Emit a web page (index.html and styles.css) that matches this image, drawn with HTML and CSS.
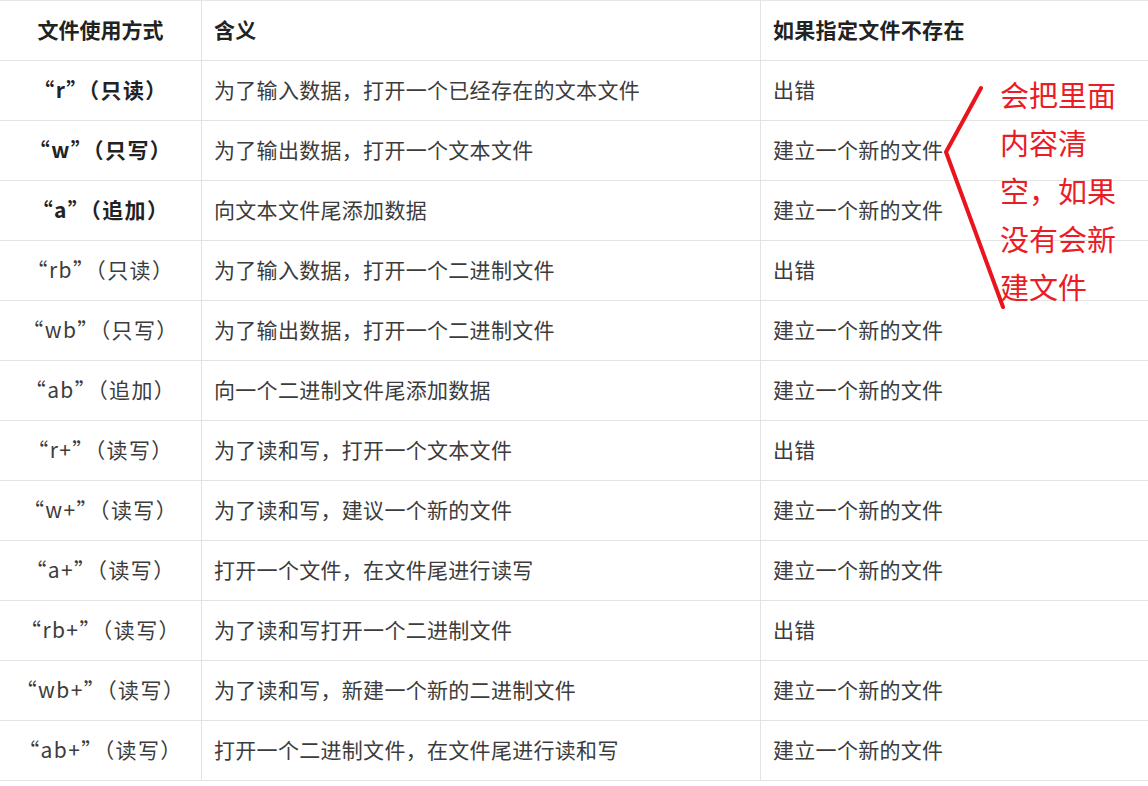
FILE: index.html
```html
<!DOCTYPE html>
<html lang="zh-CN">

<head>
    <meta charset="UTF-8">
    <meta name="viewport" content="width=device-width, initial-scale=1.0">
    <title>文件使用方式</title>
    <link rel="stylesheet" href="styles.css">
</head>

<body>
<div class="page">
    <table class="mode-table">
        <thead>
            <tr>
                <th class="col-mode">文件使用方式</th>
                <th class="col-mean">含义</th>
                <th class="col-miss">如果指定文件不存在</th>
            </tr>
        </thead>
        <tbody>
            <tr>
                <td class="col-mode strong">“r”（只读）</td>
                <td>为了输入数据，打开一个已经存在的文本文件</td>
                <td>出错</td>
            </tr>
            <tr>
                <td class="col-mode strong">“w”（只写）</td>
                <td>为了输出数据，打开一个文本文件</td>
                <td>建立一个新的文件</td>
            </tr>
            <tr>
                <td class="col-mode strong">“a”（追加）</td>
                <td>向文本文件尾添加数据</td>
                <td>建立一个新的文件</td>
            </tr>
            <tr>
                <td class="col-mode">“rb”（只读）</td>
                <td>为了输入数据，打开一个二进制文件</td>
                <td>出错</td>
            </tr>
            <tr>
                <td class="col-mode">“wb”（只写）</td>
                <td>为了输出数据，打开一个二进制文件</td>
                <td>建立一个新的文件</td>
            </tr>
            <tr>
                <td class="col-mode">“ab”（追加）</td>
                <td>向一个二进制文件尾添加数据</td>
                <td>建立一个新的文件</td>
            </tr>
            <tr>
                <td class="col-mode">“r+”（读写）</td>
                <td>为了读和写，打开一个文本文件</td>
                <td>出错</td>
            </tr>
            <tr>
                <td class="col-mode">“w+”（读写）</td>
                <td>为了读和写，建议一个新的文件</td>
                <td>建立一个新的文件</td>
            </tr>
            <tr>
                <td class="col-mode">“a+”（读写）</td>
                <td>打开一个文件，在文件尾进行读写</td>
                <td>建立一个新的文件</td>
            </tr>
            <tr>
                <td class="col-mode">“rb+”（读写）</td>
                <td>为了读和写打开一个二进制文件</td>
                <td>出错</td>
            </tr>
            <tr>
                <td class="col-mode">“wb+”（读写）</td>
                <td>为了读和写，新建一个新的二进制文件</td>
                <td>建立一个新的文件</td>
            </tr>
            <tr>
                <td class="col-mode">“ab+”（读写）</td>
                <td>打开一个二进制文件，在文件尾进行读和写</td>
                <td>建立一个新的文件</td>
            </tr>
        </tbody>
    </table>

    <!-- 手写批注 -->
    <svg class="note-mark" width="1148" height="786" viewBox="0 0 1148 786">
        <polyline points="981,88 946,152 1003,307" fill="none" stroke="#e8141e" stroke-width="4" stroke-linejoin="round" stroke-linecap="round"/>
    </svg>
    <div class="note-text">会把里面内容清空，如果没有会新建文件</div>
</div>
</body>

</html>
```

FILE: styles.css
```css
/* 表格页面 */
body {
    margin: 0;
    padding: 0;
    background-color: #fff;
    font-family: "Noto Sans CJK SC", "Noto Sans", sans-serif;
}

.page {
    position: relative;
    width: 1148px;
    height: 786px;
    overflow: hidden;
}

.mode-table {
    width: 1148px;
    border-collapse: collapse;
    table-layout: fixed;
    border-top: 1px solid #e6e6e6;
}

.mode-table th,
.mode-table td {
    height: 56px;
    padding: 0 12px 3px;
    border-bottom: 1px solid #e3e3e3;
    border-left: 1px solid #e3e3e3;
    font-size: 21px;
    text-align: left;
    color: #3c3c3c;
    white-space: nowrap;
    line-height: 1;
    letter-spacing: 0.3px;
}

.mode-table th {
    font-weight: bold;
    color: #222;
}

.mode-table .col-mode {
    width: 177px;
    border-left: none;
    text-align: center;
    letter-spacing: 0;
}

.mode-table td.col-mode {
    letter-spacing: 1.4px;
}

.mode-table .col-mean {
    width: 534px;
}

.mode-table .strong {
    font-weight: bold;
    color: #222;
}

.note-mark {
    position: absolute;
    left: 0;
    top: 0;
}

.note-text {
    position: absolute;
    left: 1000px;
    top: 70px;
    width: 120px;
    font-size: 29px;
    line-height: 48px;
    color: #ea1c26;
}
```
